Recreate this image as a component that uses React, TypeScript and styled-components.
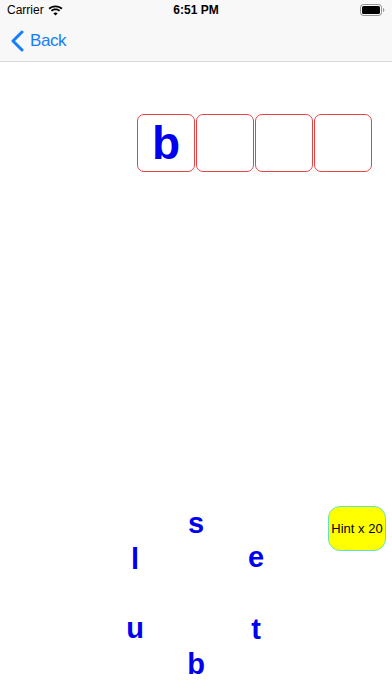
import styled, { createGlobalStyle } from "styled-components";

const GlobalStyle = createGlobalStyle`
html, body {
    margin: 0;
    padding: 0;
    background: #ffffff;
}
body {
    font-family: "Liberation Sans", Arial, sans-serif;
}
`;

const Screen = styled('div')`
width: 392px;
height: 696px;
display: flex;
flex-direction: column;
overflow: hidden;
background: #ffffff;
`;

const StatusBar = styled('div')`
height: 20px;
display: flex;
align-items: center;
justify-content: space-between;
padding: 0 7px;
background: #f8f8f8;
font-size: 12px;
color: #000;
position: relative;
`;

const Carrier = styled('div')`
display: flex;
align-items: center;
gap: 4px;
`;

const Clock = styled('div')`
position: absolute;
left: 0;
right: 0;
text-align: center;
font-weight: bold;
pointer-events: none;
`;

const NavBar = styled('div')`
height: 41px;
display: flex;
align-items: center;
padding-left: 11px;
background: #f8f8f8;
border-bottom: 1px solid #d8d8d8;
`;

const BackButton = styled('div')`
display: flex;
align-items: center;
gap: 6px;
color: #147efb;
font-size: 17px;
letter-spacing: -0.4px;
`;

const Content = styled('div')`
flex: 1;
display: flex;
flex-direction: column;
`;

const Board = styled('div')`
display: flex;
gap: 1px;
margin-top: 52px;
padding-left: 137px;
`;

const Slot = styled('div')`
width: 56px;
height: 56px;
border: 1px solid #e64444;
border-radius: 7px;
display: flex;
align-items: center;
justify-content: center;
color: #0000f0;
font-weight: bold;
font-size: 46px;
line-height: 1;
`;

const Bottom = styled('div')`
margin-top: auto;
margin-bottom: 11px;
display: flex;
align-items: flex-start;
padding-left: 105px;
gap: 41px;
`;

const Wheel = styled('div')`
position: relative;
width: 182px;
height: 180px;
`;

const Letter = styled('div')<{ $x: number; $y: number }>`
position: absolute;
left: ${p => p.$x}px;
top: ${p => p.$y}px;
transform: translate(-50%, -50%);
color: #0000f0;
font-weight: bold;
font-size: 29px;
line-height: 1;
`;

const HintButton = styled('div')`
width: 56px;
height: 43px;
margin-top: 1px;
background: #ffff00;
border: 1px solid #5ee3c6;
border-radius: 12px;
display: flex;
align-items: center;
justify-content: center;
font-size: 13px;
color: #000;
white-space: nowrap;
`;

const wheelLetters = [
    { ch: "s", x: 91, y: 18 },
    { ch: "l", x: 30, y: 54 },
    { ch: "e", x: 151, y: 52 },
    { ch: "u", x: 30, y: 123 },
    { ch: "t", x: 151, y: 124 },
    { ch: "b", x: 91, y: 159 },
];

function Wifi() {
    return (
        <svg width="15" height="11" viewBox="0 0 15 11">
            <path d="M7.5 2.2c2.2 0 4.2.8 5.7 2.2l1.3-1.3C12.7 1.4 10.2.4 7.5.4S2.3 1.4.5 3.1l1.3 1.3c1.5-1.4 3.5-2.2 5.7-2.2z" fill="#000" />
            <path d="M7.5 5.3c1.3 0 2.5.5 3.4 1.3l1.3-1.3C11 4.1 9.3 3.5 7.5 3.5S4 4.1 2.8 5.3l1.3 1.3c.9-.8 2.1-1.3 3.4-1.3z" fill="#000" />
            <path d="M7.5 10.6l2.1-2.1c-.5-.5-1.3-.9-2.1-.9s-1.6.3-2.1.9z" fill="#000" />
        </svg>
    );
}

function Battery() {
    return (
        <svg width="25" height="12" viewBox="0 0 25 12">
            <rect x="0.5" y="0.5" width="21" height="11" rx="3" fill="none" stroke="#000" strokeOpacity="0.4" />
            <rect x="2" y="2" width="18" height="8" rx="1.6" fill="#000" />
            <path d="M23 4v4c.8-.3 1.3-1.1 1.3-2S23.8 4.3 23 4z" fill="#000" fillOpacity="0.4" />
        </svg>
    );
}

export default function App() {
    return (
        <>
            <GlobalStyle />
            <Screen>
                <StatusBar>
                    <Carrier>
                        Carrier
                        <Wifi />
                    </Carrier>
                    <Clock>6:51 PM</Clock>
                    <Battery />
                </StatusBar>
                <NavBar>
                    <BackButton>
                        <svg width="13" height="22" viewBox="0 0 13 22">
                            <path d="M11 2L2 11l9 9" fill="none" stroke="#147efb" strokeWidth="3" strokeLinecap="round" strokeLinejoin="round" />
                        </svg>
                        Back
                    </BackButton>
                </NavBar>
                <Content>
                    <Board>
                        <Slot>b</Slot>
                        <Slot />
                        <Slot />
                        <Slot />
                    </Board>
                    <Bottom>
                        <Wheel>
                            {wheelLetters.map((l, i) => (
                                <Letter key={i} $x={l.x} $y={l.y}>{l.ch}</Letter>
                            ))}
                        </Wheel>
                        <HintButton>Hint x 20</HintButton>
                    </Bottom>
                </Content>
            </Screen>
        </>
    );
}
